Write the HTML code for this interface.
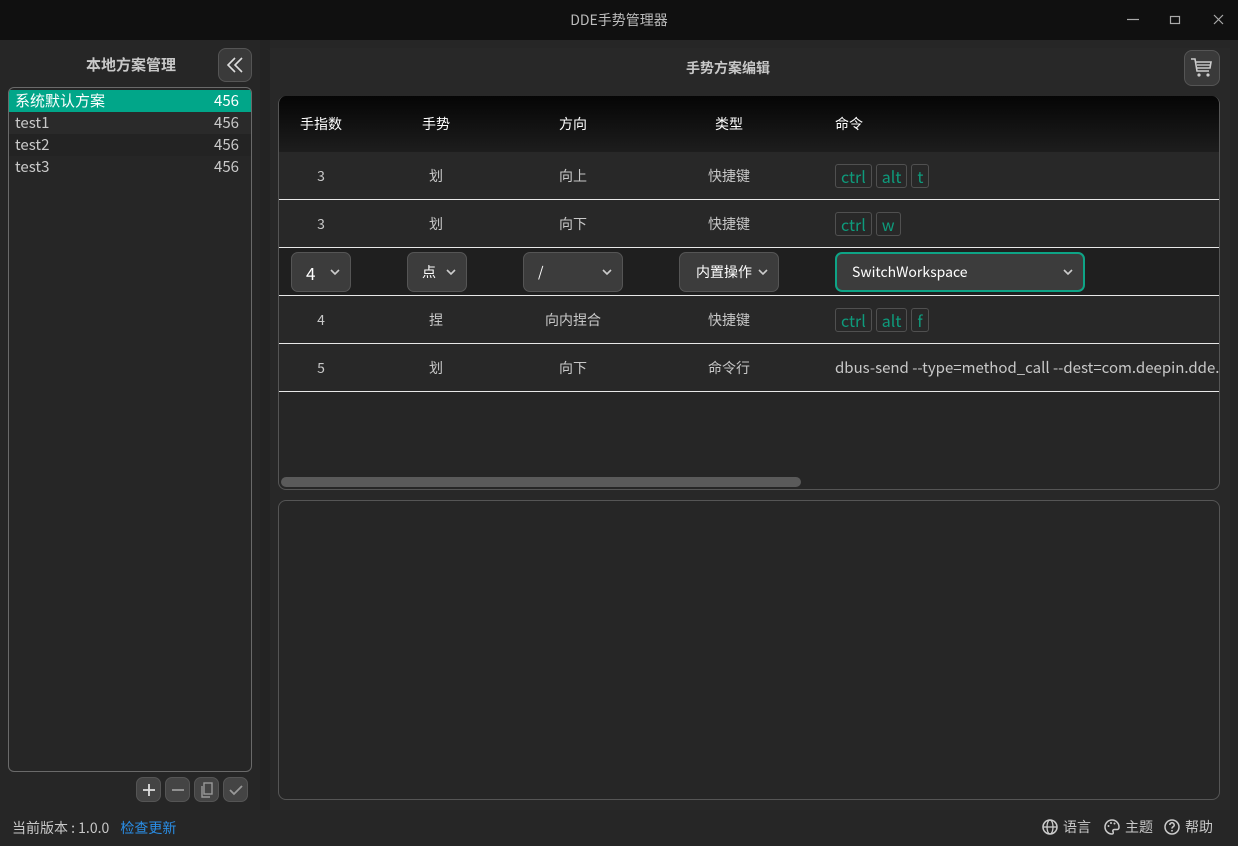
<!DOCTYPE html>
<html><head><meta charset="utf-8"><style>
*{box-sizing:border-box;margin:0;padding:0}
body{width:1238px;height:846px;background:#262626;font-family:"Noto Sans CJK SC","Liberation Sans",sans-serif;color:#c8c8c8;position:relative;overflow:hidden;font-size:14px}
.abs{position:absolute}
.title{left:0;top:0;width:1238px;height:40px;background:#101010;color:#bdbdbd;text-align:center;line-height:40px;font-size:14px}
.btn{border:1px solid #555;background:#3a3a3a;border-radius:6px}
.list{left:8px;top:87px;width:244px;height:685px;border:1px solid #6a6a6a;border-radius:6px;background:#262626;overflow:hidden}
.li{height:22px;line-height:22px;padding:0 12px 0 6px;display:flex;justify-content:space-between;font-size:15px;color:#c9c9c9}
.right{left:270px;top:48px;width:960px;height:762px;background:#282828}
.table{left:278px;top:96px;width:942px;height:394px;border:1px solid #555;border-top:none;border-radius:8px;background:#262626;overflow:hidden}
.hdr{position:absolute;left:0;top:0;width:100%;height:56px;background:linear-gradient(#050505,#1d1d1d);color:#fff;font-size:14px}
.row{position:absolute;left:0;width:100%;height:48px;border-bottom:1px solid #e8e8e8;font-size:14px;color:#c8c8c8}
.c{position:absolute;top:0;height:100%;display:flex;align-items:center;justify-content:center;transform:translateX(-50%);white-space:nowrap}
.cmd{position:absolute;left:556px;top:0;height:100%;display:flex;align-items:center;gap:4px;white-space:nowrap;font-size:15px}
.k{border:1px solid #505050;border-radius:3px;color:#0e9b7c;padding:0 5px;height:24px;line-height:22px;font-size:16px}
.sel{position:absolute;top:4px;height:40px;border:1px solid #555;border-radius:7px;background:#3c3c3c;color:#fff;display:flex;align-items:center;justify-content:space-between;padding:0 8px 0 14px;font-size:14px}
.chev{width:14px;height:14px}
</style></head><body>
<div class="abs title">DDE手势管理器</div>
<svg class="abs" style="left:1126px;top:13px" width="110" height="14"><line x1="1" y1="6.5" x2="13" y2="6.5" stroke="#aaa" stroke-width="1.2"/><rect x="44.5" y="3.5" width="9" height="7" fill="none" stroke="#aaa" stroke-width="1.2"/><path d="M88 2l9 9M97 2l-9 9" stroke="#aaa" stroke-width="1.2"/></svg>

<div class="abs" style="left:260px;top:40px;width:10px;height:770px;background:#232323"></div>
<div class="abs" style="left:86px;top:54px;font-size:15px;font-weight:bold;color:#c8c8c8">本地方案管理</div>
<div class="abs btn" style="left:218px;top:48px;width:34px;height:34px;border-radius:8px"><svg width="32" height="32"><path d="M16 9l-7 7 7 7M23 9l-7 7 7 7" fill="none" stroke="#ddd" stroke-width="1.6"/></svg></div>
<div class="abs list">
<div class="li" style="background:#01a689;color:#fff;margin-top:2px"><span>系统默认方案</span><span>456</span></div>
<div class="li" style="background:#2a2a2a"><span>test1</span><span>456</span></div>
<div class="li" style="background:#232323"><span>test2</span><span>456</span></div>
<div class="li"><span>test3</span><span>456</span></div>
</div>
<div class="abs btn" style="left:136px;top:777px;width:25px;height:25px;border-radius:7px;background:#444"><svg width="24" height="24"><path d="M12 6v12M6 12h12" stroke="#e0e0e0" stroke-width="1.8"/></svg></div>
<div class="abs btn" style="left:165px;top:777px;width:25px;height:25px;border-radius:7px;background:#444"><svg width="24" height="24"><path d="M6 12h12" stroke="#999" stroke-width="1.8"/></svg></div>
<div class="abs btn" style="left:194px;top:777px;width:25px;height:25px;border-radius:7px;background:#444"><svg width="24" height="24"><rect x="9" y="5" width="8" height="11" fill="none" stroke="#999" stroke-width="1.4"/><path d="M7 8v11h8" fill="none" stroke="#999" stroke-width="1.4"/></svg></div>
<div class="abs btn" style="left:223px;top:777px;width:25px;height:25px;border-radius:7px;background:#444"><svg width="24" height="24"><path d="M6 12l4 4 8-8" fill="none" stroke="#999" stroke-width="1.8"/></svg></div>

<div class="abs right"></div>
<div class="abs" style="left:686px;top:58px;font-size:14px;font-weight:bold;color:#c8c8c8">手势方案编辑</div>
<div class="abs btn" style="left:1184px;top:50px;width:36px;height:36px;border-radius:8px;background:#3a3a3a"><svg width="34" height="34"><path d="M6 8h4l2 12h12M11 11h15l-1 6H12" fill="none" stroke="#ccc" stroke-width="1.6"/><path d="M12 14h13" stroke="#ccc" stroke-width="1.4"/><circle cx="14" cy="24" r="1.6" fill="#ccc"/><circle cx="23" cy="24" r="1.6" fill="#ccc"/></svg></div>

<div class="abs table">
<div class="hdr"><div class="c" style="left:42px">手指数</div><div class="c" style="left:157px">手势</div><div class="c" style="left:294px">方向</div><div class="c" style="left:450px">类型</div><div class="c" style="left:556px;transform:none">命令</div></div>
<div class="row" style="top:56px;background:#282828"><div class="c" style="left:42px">3</div><div class="c" style="left:157px">划</div><div class="c" style="left:294px">向上</div><div class="c" style="left:450px">快捷键</div><div class="cmd"><span class="k">ctrl</span><span class="k">alt</span><span class="k">t</span></div></div>
<div class="row" style="top:104px;background:#282828"><div class="c" style="left:42px">3</div><div class="c" style="left:157px">划</div><div class="c" style="left:294px">向下</div><div class="c" style="left:450px">快捷键</div><div class="cmd"><span class="k">ctrl</span><span class="k">w</span></div></div>
<div class="row" style="top:152px;background:#1f1f1f">
<div class="sel" style="left:12px;width:60px;font-size:17px"><span>4</span><svg class="chev"><path d="M3 5l4 4 4-4" fill="none" stroke="#ccc" stroke-width="1.6"/></svg></div>
<div class="sel" style="left:128px;width:60px"><span>点</span><svg class="chev"><path d="M3 5l4 4 4-4" fill="none" stroke="#ccc" stroke-width="1.6"/></svg></div>
<div class="sel" style="left:244px;width:100px"><span>/</span><svg class="chev"><path d="M3 5l4 4 4-4" fill="none" stroke="#ccc" stroke-width="1.6"/></svg></div>
<div class="sel" style="left:400px;width:100px;padding-left:16px"><span>内置操作</span><svg class="chev"><path d="M3 5l4 4 4-4" fill="none" stroke="#ccc" stroke-width="1.6"/></svg></div>
<div class="sel" style="left:556px;width:250px;border:2px solid #0ea486;padding-left:15px"><span>SwitchWorkspace</span><svg class="chev"><path d="M3 5l4 4 4-4" fill="none" stroke="#ccc" stroke-width="1.6"/></svg></div>
</div>
<div class="row" style="top:200px;background:#282828"><div class="c" style="left:42px">4</div><div class="c" style="left:157px">捏</div><div class="c" style="left:294px">向内捏合</div><div class="c" style="left:450px">快捷键</div><div class="cmd"><span class="k">ctrl</span><span class="k">alt</span><span class="k">f</span></div></div>
<div class="row" style="top:248px;background:#282828"><div class="c" style="left:42px">5</div><div class="c" style="left:157px">划</div><div class="c" style="left:294px">向下</div><div class="c" style="left:450px">命令行</div><div class="cmd">dbus-send --type=method_call --dest=com.deepin.dde.</div></div>
<div style="position:absolute;left:2px;top:381px;width:520px;height:10px;border-radius:5px;background:#5a5a5a"></div>
</div>
<div class="abs" style="left:278px;top:500px;width:942px;height:300px;border:1px solid #555;border-radius:8px;background:#262626"></div>

<div class="abs" style="left:12px;top:818px;font-size:14px;color:#c8c8c8">当前版本 : 1.0.0 <span style="color:#2a8ee6;margin-left:8px">检查更新</span></div>
<div class="abs" style="left:1041px;top:817px;font-size:14px;color:#c8c8c8;display:flex;align-items:center;gap:4px;white-space:nowrap">
<svg width="18" height="18"><circle cx="9" cy="9" r="7" fill="none" stroke="#ccc" stroke-width="1.5"/><ellipse cx="9" cy="9" rx="3" ry="7" fill="none" stroke="#ccc" stroke-width="1.3"/><path d="M2 9h14" stroke="#ccc" stroke-width="1.3"/></svg><span>语言</span>
<svg width="18" height="18" style="margin-left:8px"><path d="M9 2a7 7 0 1 0 0 14c1.5 0 1.5-1.5 1-2.5s0-2 1.5-2H14a2 2 0 0 0 2-2A7 7 0 0 0 9 2z" fill="none" stroke="#ccc" stroke-width="1.5"/><circle cx="5.5" cy="8" r="1" fill="#ccc"/><circle cx="8" cy="5" r="1" fill="#ccc"/><circle cx="11.5" cy="5.5" r="1" fill="#ccc"/></svg><span>主题</span>
<svg width="18" height="18" style="margin-left:6px"><circle cx="9" cy="9" r="7" fill="none" stroke="#ccc" stroke-width="1.5"/><path d="M6.8 7a2.2 2.2 0 1 1 3 2c-.7.3-.8.8-.8 1.6" fill="none" stroke="#ccc" stroke-width="1.5"/><circle cx="9" cy="12.8" r=".9" fill="#ccc"/></svg><span>帮助</span>
</div>
</body></html>
